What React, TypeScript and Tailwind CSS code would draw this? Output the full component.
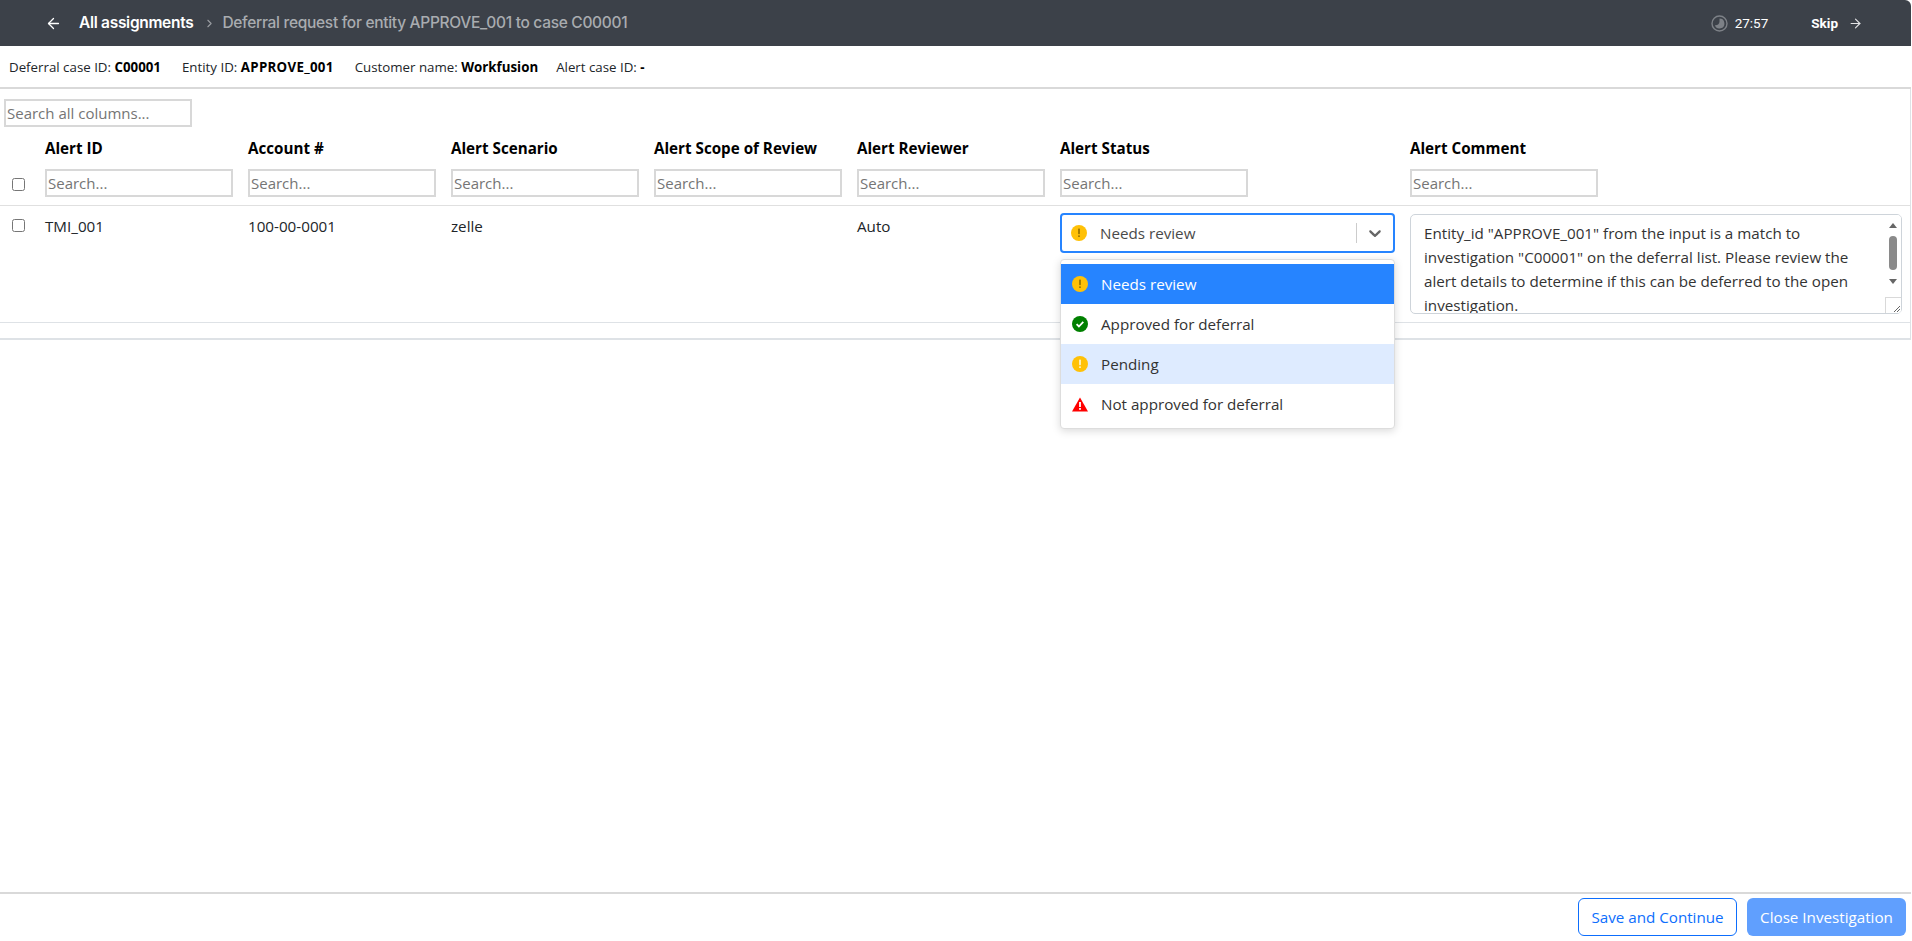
import { ArrowLeft, ArrowRight, ChevronRight } from "lucide-react";

const cols = ["Alert ID", "Account #", "Alert Scenario", "Alert Scope of Review", "Alert Reviewer", "Alert Status", "Alert Comment"];
const comment =
  'Entity_id "APPROVE_001" from the input is a match to investigation "C00001" on the deferral list. Please review the alert details to determine if this can be deferred to the open investigation.';

const AlertIcon = ({ mark = "#9a7500" }: { mark?: string }) => (
  <svg width="16" height="16" viewBox="0 0 16 16" className="shrink-0">
    <circle cx="8" cy="8" r="8" fill="#ffc107" />
    <rect x="7.1" y="3.6" width="1.8" height="5.6" rx="0.6" fill={mark} />
    <rect x="7.1" y="10.2" width="1.8" height="1.9" rx="0.6" fill={mark} />
  </svg>
);

const CheckIcon = () => (
  <svg width="16" height="16" viewBox="0 0 16 16" className="shrink-0">
    <circle cx="8" cy="8" r="8" fill="#008000" />
    <path d="M4.6 8.2l2.3 2.3 4.4-4.6" fill="none" stroke="#fff" strokeWidth="1.8" />
  </svg>
);

const WarnIcon = () => (
  <svg width="16" height="15" viewBox="0 0 16 15" className="shrink-0">
    <path d="M8 0.4L16 14.6H0z" fill="#ff0000" />
    <rect x="7.1" y="5" width="1.8" height="5" fill="#fff" />
    <rect x="7.1" y="11" width="1.8" height="1.8" fill="#fff" />
  </svg>
);

const TimerIcon = () => (
  <svg width="17" height="17" viewBox="0 0 17 17">
    <circle cx="8.5" cy="8.5" r="7.5" fill="none" stroke="#7d8187" strokeWidth="1.4" />
    <path d="M8.5 3.6a4.9 4.9 0 1 1-4.6 6.6c2.6.3 4.6-1.2 4.6-3.6z" fill="#7d8187" />
  </svg>
);

const options = [
  { label: "Needs review", icon: <AlertIcon />, cls: "bg-[#2684ff] text-white" },
  { label: "Approved for deferral", icon: <CheckIcon />, cls: "text-[#333333]" },
  { label: "Pending", icon: <AlertIcon mark="#fff3c4" />, cls: "bg-[#deebff] text-[#333333]" },
  { label: "Not approved for deferral", icon: <WarnIcon />, cls: "text-[#333333]" },
];

const SearchBox = ({ placeholder = "Search..." }: { placeholder?: string }) => (
  <input
    placeholder={placeholder}
    className="block h-[28px] w-[188px] border-2 border-[#d8d8d8] px-[1px] text-[15px] font-normal outline-none placeholder:text-[#757575]"
  />
);

const Check = () => (
  <span className="block h-[13px] w-[13px] rounded-[2.5px] border border-[#767676] bg-white" />
);

export default function App() {
  return (
    <div className="flex h-screen flex-col overflow-hidden bg-white pr-[1px] text-[15.2px] text-[#212529] font-['Open_Sans','Noto_Sans',sans-serif]">
      <header className="flex h-[46px] shrink-0 items-center rounded-tr-[6px] bg-[#3c4149] pl-[45px] pr-[48px] font-['Inter',sans-serif] text-white">
        <ArrowLeft size={17} strokeWidth={1.8} />
        <span className="ml-[17px] text-[15.5px] font-semibold tracking-[-0.3px]">All assignments</span>
        <ChevronRight size={13} className="ml-[10px] text-[#9a9da2]" />
        <span className="ml-[6px] text-[15.5px] font-medium tracking-[-0.3px] text-[#a9acb0]">
          Deferral request for entity APPROVE_001 to case C00001
        </span>
        <div className="ml-auto flex items-center font-['Roboto',sans-serif]">
          <TimerIcon />
          <span className="ml-[7px] text-[13.5px]">27:57</span>
          <span className="ml-[43px] text-[13.5px] font-bold">Skip</span>
          <ArrowRight size={15} strokeWidth={1.8} className="ml-[10px] text-[#e3e4e6]" />
        </div>
      </header>

      <div className="flex h-[43px] shrink-0 items-center gap-[21px] border-b-2 border-[#d9d9d9] pl-[9px] pt-[2px] text-[13.3px] text-[#212529]">
        <span>Deferral case ID: <b className="text-black">C00001</b></span>
        <span>Entity ID: <b className="tracking-[0.3px] text-black">APPROVE_001</b></span>
        <span>Customer name: <b className="text-black">Workfusion</b></span>
        <span className="-ml-[3px]">Alert case ID: <b className="text-black">-</b></span>
      </div>

      <div className="border-r border-[#dee2e6]">
        <div className="pl-[4px] pt-[10px]">
          <SearchBox placeholder="Search all columns..." />
        </div>
        <div className="relative border-b-2 border-[#dee2e6] pb-[15px]">
          <table className="w-full table-fixed border-b border-[#dee2e6]">
            <thead>
              <tr className="border-b border-[#e0e0e0]">
                <th className="w-[45px] pb-[14px] pl-[12px] align-bottom font-normal">
                  <Check />
                </th>
                {cols.map((c, i) => (
                  <th
                    key={c}
                    className={`${i === 5 ? "w-[350px]" : i === 6 ? "" : "w-[203px]"} pb-[8px] text-left align-top text-[15.2px] font-bold text-black`}
                  >
                    <div className="mb-[11px] mt-[11px] h-[20px] leading-[20px]">{c}</div>
                    <SearchBox />
                  </th>
                ))}
              </tr>
            </thead>
            <tbody>
              <tr className="h-[117px] align-top">
                <td className="pl-[12px] pt-[13px]"><Check /></td>
                <td className="pt-[9px]">TMI_001</td>
                <td className="pt-[9px]">100-00-0001</td>
                <td className="pt-[9px]">zelle</td>
                <td />
                <td className="pt-[9px]">Auto</td>
                <td className="pr-[15px] pt-[7px]">
                  <div className="flex h-[40px] items-center rounded-[4px] border-2 border-[#2684ff] pl-[9px] text-[#4a4a4a]">
                    <AlertIcon />
                    <span className="ml-[13px]">Needs review</span>
                    <span className="ml-auto h-[20px] w-[1px] bg-[#cccccc]" />
                    <svg width="20" height="20" viewBox="0 0 20 20" className="mx-[8px] fill-[#666666]">
                      <path d="M4.516 7.548c.436-.446 1.043-.481 1.576 0L10 11.295l3.908-3.747c.533-.481 1.141-.446 1.574 0 .436.445.408 1.197 0 1.615-.406.418-4.695 4.502-4.695 4.502a1.095 1.095 0 0 1-1.576 0S4.924 9.581 4.516 9.163c-.409-.418-.436-1.17 0-1.615z" />
                    </svg>
                  </div>
                </td>
                <td className="pr-[8px] pt-[8px]">
                  <div className="relative h-[100px] overflow-hidden rounded-[5px] border border-[#ced4da]">
                    <textarea
                      readOnly
                      value={comment}
                      className="h-full w-full resize-none overflow-hidden py-[6px] pl-[13px] pr-[34px] text-[15.2px] leading-[24px] text-[#333333] outline-none"
                    />
                    <div className="absolute bottom-0 right-0 top-0 flex w-[17px] flex-col items-center bg-white">
                      <span className="mt-[8px] h-0 w-0 border-x-[4px] border-b-[5px] border-x-transparent border-b-[#666666]" />
                      <span className="mt-[8px] h-[34px] w-[8px] rounded-full bg-[#8a8a8a]" />
                      <span className="mt-[9px] h-0 w-0 border-x-[4px] border-t-[5px] border-x-transparent border-t-[#666666]" />
                      <span className="absolute bottom-0 right-0 h-[16px] w-[16px] border-l border-t border-[#d9d9d9] bg-white">
                        <svg width="15" height="15" viewBox="0 0 15 15">
                          <path d="M14 8l-6 6M14 11l-3 3" stroke="#666666" strokeWidth="1" />
                        </svg>
                      </span>
                    </div>
                  </div>
                </td>
              </tr>
            </tbody>
          </table>
          <div className="absolute left-[1060px] top-[132px] z-10 w-[335px] rounded-[4px] border border-[#dddddd] bg-white py-[4px] shadow-[0_2px_8px_rgba(0,0,0,0.15)]">
            {options.map((o) => (
              <div key={o.label} className={`flex h-[40px] items-center pl-[11px] ${o.cls}`}>
                {o.icon}
                <span className="ml-[13px]">{o.label}</span>
              </div>
            ))}
          </div>
        </div>
      </div>

      <footer className="mt-auto flex h-[49px] shrink-0 items-start justify-end gap-[10px] border-t-2 border-[#d9d9d9] pr-[5px] pt-[4px] text-[15.2px]">
        <button className="h-[38px] w-[159px] rounded-[6px] border border-[#0d6efd] bg-white text-[#0d6efd]">Save and Continue</button>
        <button className="h-[38px] w-[159px] rounded-[6px] bg-[#609ffe] text-[#ffffff]">Close Investigation</button>
      </footer>
    </div>
  );
}
